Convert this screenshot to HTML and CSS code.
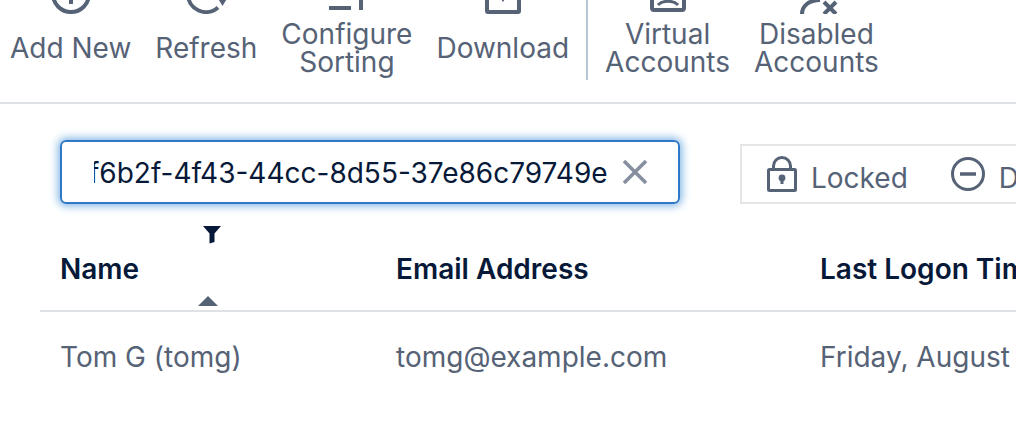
FILE: index.html
```html
<!DOCTYPE html>
<html lang="en">
<head>
    <meta charset="UTF-8">
    <meta name="viewport" content="width=device-width, initial-scale=1.0">
    <title>User Accounts</title>
    <link rel="stylesheet" href="styles.css">
</head>
<body>

    <!-- Toolbar -->
    <div class="toolbar">
        <button class="tool" type="button">
            <svg class="tool-icon" viewBox="0 0 44 14" aria-hidden="true">
                <circle cx="22" cy="-6" r="18" fill="none" stroke="currentColor" stroke-width="4"/>
                <path d="M22 -14V4" stroke="currentColor" stroke-width="4"/>
            </svg>
            <span class="tool-label">Add New</span>
        </button>
        <button class="tool" type="button">
            <svg class="tool-icon" viewBox="0 0 44 14" aria-hidden="true">
                <path d="M4 -6A18 18 0 0 0 34 7.500" fill="none" stroke="currentColor" stroke-width="4"/>
                <path d="M33 -3L44 -3L38.500 6z" fill="currentColor"/>
            </svg>
            <span class="tool-label">Refresh</span>
        </button>
        <button class="tool" type="button">
            <svg class="tool-icon" viewBox="0 0 44 14" aria-hidden="true">
                <path d="M4 8H26M36 -12V10" stroke="currentColor" stroke-width="4"/>
            </svg>
            <span class="tool-label">Configure<br>Sorting</span>
        </button>
        <button class="tool" type="button">
            <svg class="tool-icon" viewBox="0 0 44 14" aria-hidden="true">
                <rect x="6" y="-20" width="32" height="32" rx="1" fill="none" stroke="currentColor" stroke-width="4"/>
                <path d="M18 -4L22 2L26 -4z" fill="currentColor"/>
            </svg>
            <span class="tool-label">Download</span>
        </button>
        <div class="divider"></div>
        <button class="tool" type="button">
            <svg class="tool-icon" viewBox="0 0 44 14" aria-hidden="true">
                <rect x="6" y="-22" width="32" height="32" rx="2" fill="none" stroke="currentColor" stroke-width="4"/>
                <path d="M12 5C17 0 27 0 32 5" fill="none" stroke="currentColor" stroke-width="3"/>
            </svg>
            <span class="tool-label">Virtual<br>Accounts</span>
        </button>
        <button class="tool" type="button">
            <svg class="tool-icon" viewBox="0 0 44 14" aria-hidden="true">
                <path d="M8 14C8 6 15 0 26 0" fill="none" stroke="currentColor" stroke-width="4"/>
                <path d="M30 2L42 14M42 2L30 14" stroke="currentColor" stroke-width="4"/>
            </svg>
            <span class="tool-label">Disabled<br>Accounts</span>
        </button>
    </div>

    <!-- Search and status filters -->
    <div class="filters">
        <div class="search">
            <input class="search-input" id="search" type="text" aria-label="Search accounts" value="f6b2f-4f43-44cc-8d55-37e86c79749e">
            <button class="clear" type="button" aria-label="Clear search">
                <svg width="26" height="26" viewBox="0 0 26 26" aria-hidden="true">
                    <path d="M2 2L24 24M24 2L2 24" stroke="currentColor" stroke-width="3.600"/>
                </svg>
            </button>
        </div>
        <div class="status">
            <button class="status-item" type="button">
                <svg width="30" height="36" viewBox="0 0 30 36" aria-hidden="true">
                    <path d="M6.500 13V10A8.500 8.500 0 0 1 23.500 10V13" fill="none" stroke="currentColor" stroke-width="3"/>
                    <rect x="1.500" y="13.500" width="27" height="21" rx="1" fill="none" stroke="currentColor" stroke-width="3"/>
                    <circle cx="15" cy="22" r="3.400" fill="currentColor"/>
                    <path d="M15 22V28" stroke="currentColor" stroke-width="3"/>
                </svg>
                <span>Locked</span>
            </button>
            <button class="status-item" type="button">
                <svg width="34" height="36" viewBox="0 0 34 36" aria-hidden="true">
                    <circle cx="17" cy="18" r="15.500" fill="none" stroke="currentColor" stroke-width="3"/>
                    <path d="M9 18H25" stroke="currentColor" stroke-width="3.500"/>
                </svg>
                <span>Disabled</span>
            </button>
        </div>
    </div>

    <!-- Accounts table -->
    <div class="table-wrap">
        <table class="accounts">
            <colgroup>
                <col class="col-name">
                <col class="col-email">
                <col>
            </colgroup>
            <thead>
                <tr>
                    <th>
                        <div class="sorted">
                            <svg class="funnel" width="18" height="18" viewBox="0 0 18 18" aria-hidden="true">
                                <path d="M0 0H18L11.500 7.500V16L6.500 17.500V7.500z" fill="currentColor"/>
                            </svg>
                            <span class="heading">Name</span>
                            <svg class="arrow" width="20" height="10" viewBox="0 0 20 10" aria-hidden="true">
                                <path d="M0 10L10 0L20 10z" fill="currentColor"/>
                            </svg>
                        </div>
                    </th>
                    <th><span class="heading">Email Address</span></th>
                    <th><span class="heading">Last Logon Time</span></th>
                </tr>
            </thead>
            <tbody>
                <tr>
                    <td>Tom G (tomg)</td>
                    <td>tomg@example.com</td>
                    <td>Friday, August</td>
                </tr>
            </tbody>
        </table>
    </div>

    <script>
        // Keep the end of a long search term in view
        const search = document.getElementById("search");
        search.scrollLeft = search.scrollWidth;
    </script>

</body>
</html>
```
FILE: styles.css
```css
* {
    box-sizing: border-box;
}
body {
    margin: 0;
    background: #fff;
    color: #566276;
    font-family: Inter, "Liberation Sans", sans-serif;
    font-size: 28px;
    line-height: 28px;
    overflow-x: hidden;
}
button {
    padding: 0;
    border: 0;
    background: none;
    color: inherit;
    font: inherit;
    cursor: pointer;
}
svg {
    display: block;
    flex: none;
}
.toolbar {
    display: flex;
    align-items: flex-start;
    padding-bottom: 22px;
    border-bottom: 2px solid #dee2e6;
}
.tool {
    display: flex;
    flex-direction: column;
    align-items: center;
    gap: 6px;
    padding: 0 12px;
}
.tool:first-child {
    padding-left: 10px;
}
.tool-icon {
    width: 44px;
    height: 14px;
}
.tool-label {
    display: flex;
    align-items: center;
    height: 56px;
    text-align: center;
}
.divider {
    align-self: stretch;
    flex: none;
    width: 2px;
    min-height: 80px;
    margin: 0 5px;
    background: #b9c5d4;
}
.filters {
    display: flex;
    align-items: flex-end;
    gap: 60px;
    padding: 36px 0 0 60px;
}
.search {
    display: flex;
    align-items: center;
    flex: none;
    width: 620px;
    height: 64px;
    padding: 0 30px 0 32px;
    border: 2px solid #2e78c7;
    border-radius: 6px;
    box-shadow: 0 0 8px 2px #7fb5e3;
}
.search-input {
    flex: 1;
    min-width: 0;
    height: 40px;
    margin-right: 14px;
    padding: 2px 0 0;
    border: 0;
    outline: 0;
    background: none;
    color: #061938;
    font: inherit;
}
.clear {
    color: #868f9f;
}
.status {
    display: flex;
    align-items: center;
    flex: 1;
    min-width: 0;
    gap: 43px;
    height: 60px;
    padding: 0 0 0 25px;
    border: 2px solid #e5e5e5;
    border-right: 0;
    overflow: hidden;
}
.status-item {
    display: flex;
    align-items: flex-end;
    gap: 14px;
}
.table-wrap {
    padding-left: 40px;
}
.accounts {
    width: 100%;
    table-layout: fixed;
    border-collapse: collapse;
}
.col-name {
    width: 336px;
}
.col-email {
    width: 424px;
}
.accounts th,
.accounts td {
    padding: 0 0 0 20px;
    overflow: hidden;
    text-align: left;
    white-space: nowrap;
}
.accounts th {
    padding-top: 22px;
    padding-bottom: 4px;
    border-bottom: 2px solid #dee2e6;
    color: #061938;
    font-weight: 600;
    vertical-align: bottom;
}
.accounts td {
    padding-top: 31px;
    padding-bottom: 32px;
}
.sorted {
    display: flex;
    flex-direction: column;
    align-items: center;
    padding-right: 20px;
}
.funnel {
    margin: 0 0 11px 8px;
}
.heading {
    display: block;
    align-self: flex-start;
    margin-bottom: 23px;
}
.arrow {
    margin-top: -10px;
    color: #566276;
}
```
